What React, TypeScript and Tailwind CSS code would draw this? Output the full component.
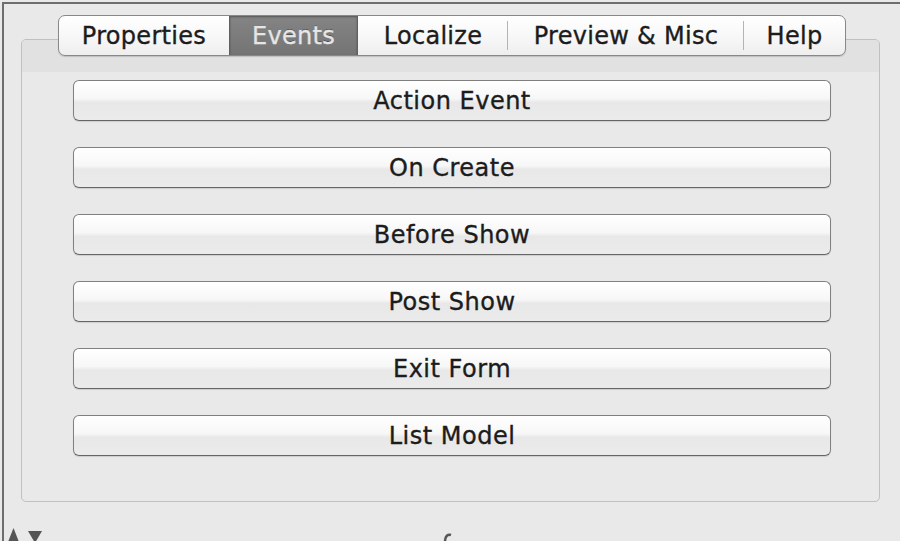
const tabs = [
  { label: 'Properties', width: 'w-[170px]', active: false },
  { label: 'Events', width: 'w-[129px]', active: true },
  { label: 'Localize', width: 'w-[150px]', active: false },
  { label: 'Preview & Misc', width: 'w-[236px]', active: false },
  { label: 'Help', width: 'w-[101px]', active: false },
]

const events = ['Action Event', 'On Create', 'Before Show', 'Post Show', 'Exit Form', 'List Model']

const Tab = ({ label, width, active, sep }: { label: string; width: string; active: boolean; sep: boolean }) => (
  <div className={`relative flex items-center justify-center h-full ${width}`}>
    {active ? (
      <div className="absolute inset-0 bg-[linear-gradient(to_bottom,#848484,#747474)] border-x border-[#606060] shadow-[inset_0_1px_2px_rgba(0,0,0,0.35)]" />
    ) : null}
    {sep ? <div className="absolute right-0 top-[5px] bottom-[5px] w-px bg-[#b4b4b4]" /> : null}
    <span
      className={`relative text-[24px] leading-none tracking-[0.3px] [-webkit-text-stroke:0.35px] ${
        active ? 'text-[#e6e6e6] [text-shadow:0_-1px_0_rgba(0,0,0,0.4)]' : 'text-[#1c1c1c]'
      }`}
    >
      {label}
    </span>
  </div>
)

const EventButton = ({ label }: { label: string }) => (
  <button className="w-[758px] h-[41px] flex items-center justify-center rounded-[6px] border border-[#808080] border-b-[#666666] bg-[linear-gradient(to_bottom,#ffffff_0%,#f7f7f7_45%,#e8e8e8_55%,#ebebeb_100%)] shadow-[0_1px_1px_rgba(0,0,0,0.12)] text-[24px] leading-none tracking-[0.5px] [-webkit-text-stroke:0.35px] text-[#1c1c1c]">
    {label}
  </button>
)

export default function App() {
  return (
    <div className="w-[900px] h-[541px] overflow-hidden bg-[#e9e9e9] pt-[2px] pl-[2px] font-['DejaVu_Sans',sans-serif]">
      <div className="h-full border-t-2 border-l-2 border-[#6e6e6e] flex flex-col">
        <div className="pl-[17px] pt-[11px] flex flex-col">
          {/* tab strip */}
          <div className="relative z-10 self-start ml-[37px] h-[41px] flex rounded-[7px] border border-[#888888] overflow-hidden bg-[linear-gradient(to_bottom,#ffffff_0%,#f8f8f8_50%,#eeeeee_100%)] shadow-[0_1px_1px_rgba(0,0,0,0.15)]">
            {tabs.map((t, i) => (
              <Tab
                key={t.label}
                label={t.label}
                width={t.width}
                active={t.active}
                sep={i >= 2 && i < tabs.length - 1}
              />
            ))}
          </div>

          {/* group panel */}
          <div className="-mt-[17px] w-[859px] h-[463px] rounded-[5px] border border-[#c0c0c0] shadow-[inset_0_1px_1px_rgba(0,0,0,0.05)] bg-[#e9e9e9] flex flex-col">
            <div className="h-[32px] bg-[#e1e1e1] rounded-t-[4px]" />
            <div className="pt-[8px] pl-[51px] flex flex-col gap-[26px]">
              {events.map(e => (
                <EventButton key={e} label={e} />
              ))}
            </div>
          </div>
        </div>

        {/* bottom strip */}
        <div className="relative mt-[24px] h-[20px] pl-[4px] flex items-start gap-[9px]">
          <svg width="11" height="14" viewBox="0 0 11 14" className="mt-[2px]">
            <path d="M5.5 0 L11 14 L0 14 Z" fill="#555555" />
          </svg>
          <svg width="14" height="12" viewBox="0 0 14 12" className="mt-[5px]">
            <path d="M0 0 L14 0 L7 12 Z" fill="#555555" />
          </svg>
          <svg width="10" height="10" viewBox="0 0 10 10" className="ml-[392px] mt-[6px]">
            <path d="M2 9 C2 4 5 2 8 3" stroke="#555" strokeWidth="2.5" fill="none" />
          </svg>
        </div>
      </div>
    </div>
  )
}
